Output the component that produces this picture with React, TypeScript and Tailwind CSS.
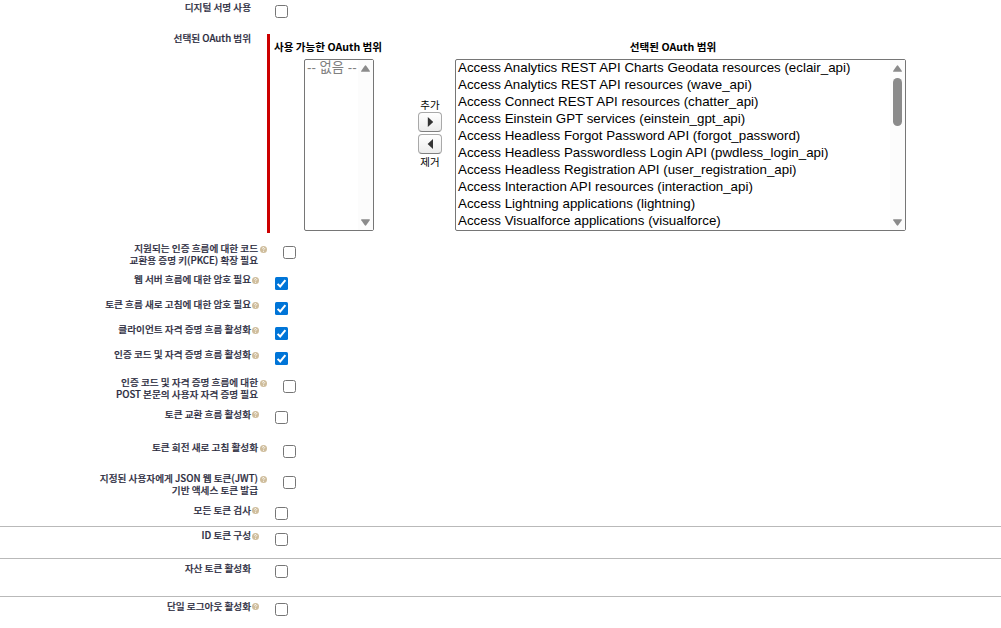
import React from 'react';

type Field = {
  lines: string[];
  height: string;
  help?: boolean;
  wide?: boolean;
  checked?: boolean;
  divider?: boolean;
  lower?: boolean;
};

const signature: Field = { lines: ['디지털 서명 사용'], height: 'h-[32px]' };

const fields: Field[] = [
  { lines: ['지원되는 인증 흐름에 대한 코드', '교환용 증명 키(PKCE) 확장 필요'], height: 'h-[31px]', help: true, wide: true },
  { lines: ['웹 서버 흐름에 대한 암호 필요'], height: 'h-[25px]', help: true, checked: true },
  { lines: ['토큰 흐름 새로 고침에 대한 암호 필요'], height: 'h-[25px]', help: true, checked: true },
  { lines: ['클라이언트 자격 증명 흐름 활성화'], height: 'h-[25px]', help: true, checked: true },
  { lines: ['인증 코드 및 자격 증명 흐름 활성화'], height: 'h-[28px]', help: true, checked: true },
  { lines: ['인증 코드 및 자격 증명 흐름에 대한', 'POST 본문의 사용자 자격 증명 필요'], height: 'h-[31px]', help: true, wide: true },
  { lines: ['토큰 교환 흐름 활성화'], height: 'h-[34px]', help: true, lower: true },
  { lines: ['토큰 회전 새로 고침 활성화'], height: 'h-[31px]', help: true, wide: true },
  { lines: ['지정된 사용자에게 JSON 웹 토큰(JWT)', '기반 액세스 토큰 발급'], height: 'h-[31px]', help: true, wide: true },
  { lines: ['모든 토큰 검사'], height: 'h-[22px]', help: true, lower: true },
  { lines: ['ID 토큰 구성'], height: 'h-[32px]', help: true, divider: true },
  { lines: ['자산 토큰 활성화'], height: 'h-[38px]', divider: true, lower: true },
  { lines: ['단일 로그아웃 활성화'], height: 'h-[32px]', help: true, divider: true, lower: true },
];

const scopes = [
  'Access Analytics REST API Charts Geodata resources (eclair_api)',
  'Access Analytics REST API resources (wave_api)',
  'Access Connect REST API resources (chatter_api)',
  'Access Einstein GPT services (einstein_gpt_api)',
  'Access Headless Forgot Password API (forgot_password)',
  'Access Headless Passwordless Login API (pwdless_login_api)',
  'Access Headless Registration API (user_registration_api)',
  'Access Interaction API resources (interaction_api)',
  'Access Lightning applications (lightning)',
  'Access Visualforce applications (visualforce)',
];

const labelText =
  'whitespace-nowrap text-right text-[9.65px] leading-[12px] font-medium text-[#2c2c40] [-webkit-text-stroke:0.2px_#2c2c40]';
const optionText = "font-['Liberation_Sans','Noto_Sans_CJK_KR',sans-serif] text-[13.33px] whitespace-nowrap -mt-px";

function HelpIcon() {
  return (
    <svg viewBox="0 0 14 14" className="size-[7px] shrink-0">
      <circle cx="7" cy="7" r="7" fill="#cfbd9c" />
      <path d="M5 5.2a2 2 0 1 1 3 1.8c-.7.4-1 .8-1 1.4M7 10v1.6" fill="none" stroke="#fff" strokeWidth="1.7" />
    </svg>
  );
}

function Checkbox({ checked }: { checked?: boolean }) {
  return (
    <span
      role="checkbox"
      aria-checked={!!checked}
      className={
        checked
          ? 'flex size-[13px] shrink-0 rounded-[1.5px] bg-[#0075d8]'
          : 'flex size-[13px] shrink-0 rounded-[2.5px] border border-[#767676] bg-white'
      }
    >
      {checked && (
        <svg viewBox="0 0 13 13" className="size-[13px]">
          <path d="M2.6 6.9l2.6 2.6 5.2-6.3" fill="none" stroke="#fff" strokeWidth="2" />
        </svg>
      )}
    </span>
  );
}

function FieldRow({ field }: { field: Field }) {
  return (
    <div className={`flex shrink-0 items-start ${field.height} ${field.divider ? 'border-t border-[#b9b9b9] pt-[3px]' : ''}`}>
      <div className={`${labelText} ${field.wide ? 'w-[258px]' : 'w-[251px]'} ${field.lower ? '' : '-mt-px'}`}>
        {field.lines.map((line) => (
          <div key={line}>{line}</div>
        ))}
      </div>
      <div className={`flex pt-[3px] ${field.wide ? 'w-[25px] pl-[2px]' : 'w-[24px] pl-px'}`}>{field.help && <HelpIcon />}</div>
      <div className="pt-[3px]">
        <Checkbox checked={field.checked} />
      </div>
    </div>
  );
}

function Arrow({ down }: { down?: boolean }) {
  return (
    <svg viewBox="0 0 9 7" className="h-[7px] w-[9px] shrink-0">
      <path
        d={down ? 'M.8.2h7.4q1.1 0 .5 1L5.4 6.1q-.9 1.2-1.8 0L.3 1.2Q-.3.2.8.2z' : 'M.8 6.8h7.4q1.1 0 .5-1L5.4.9q-.9-1.2-1.8 0L.3 5.8q-.6 1 .5 1z'}
        fill="#8b8b8b"
      />
    </svg>
  );
}

function ScrollBar({ thumb }: { thumb?: boolean }) {
  return (
    <div className="flex w-[15px] shrink-0 flex-col items-center bg-[#fcfcfc] pt-[5px] pb-[4px]">
      <Arrow />
      {thumb && <div className="mt-[6px] h-[48px] w-[9px] rounded-full bg-[#8b8b8b]" />}
      <div className="mt-auto flex">
        <Arrow down />
      </div>
    </div>
  );
}

function MoveButton({ left }: { left?: boolean }) {
  return (
    <button className="flex h-[20px] w-[24px] items-center justify-center rounded-[4px] border border-[#a9a9a9] border-b-[#7f7f7f] bg-linear-to-b from-white to-[#ececec]">
      <svg viewBox="0 0 6 10" className="h-[10px] w-[6px]">
        <path d={left ? 'M6 0v10L.6 5z' : 'M.8 0v10L6.2 5z'} fill="#333" />
      </svg>
    </button>
  );
}

const title = 'h-[16px] whitespace-nowrap text-[10.6px] leading-[16px] font-bold text-black';

function ScopePicker() {
  return (
    <div className="flex h-[209px] shrink-0 items-start">
      <div className={`${labelText} -mt-[2px] w-[251px]`}>선택된 OAuth 범위</div>
      <div className="ml-[16px] h-[199px] w-[3px] bg-[#c00]" />
      <div className="ml-[3px] flex w-[110px] flex-col items-center pt-[5px]">
        <div className={title}>사용 가능한 OAuth 범위</div>
        <div className="mt-[4px] ml-[31px] flex h-[172px] w-[70px] self-start rounded-[2px] border border-[#767676]">
          <div className={`${optionText} w-[53px] pl-[2px] leading-[17px] text-[#808080]`}>-- 없음 --</div>
          <ScrollBar />
        </div>
      </div>
      <div className="ml-[35px] flex w-[24px] flex-col items-center pt-[63px] text-[10.5px] text-black">
        <div className="h-[15px] leading-[15px] whitespace-nowrap">추가</div>
        <MoveButton />
        <div className="h-[2px]" />
        <MoveButton left />
        <div className="h-[15px] leading-[15px] whitespace-nowrap">제거</div>
      </div>
      <div className="ml-[13px] flex w-[451px] flex-col pt-[5px]">
        <div className={`${title} pr-[15px] text-center`}>선택된 OAuth 범위</div>
        <div className="mt-[4px] flex h-[172px] w-[451px] rounded-[2px] border border-[#767676]">
          <div className={`${optionText} flex-1 pl-[2px] text-black`}>
            {scopes.map((scope) => (
              <div key={scope} className="h-[17px] leading-[17px]">
                {scope}
              </div>
            ))}
          </div>
          <ScrollBar thumb />
        </div>
      </div>
    </div>
  );
}

export default function App() {
  return (
    <div className="flex h-[628px] w-[1001px] flex-col overflow-hidden bg-white pt-[2px] font-['Noto_Sans_CJK_KR',sans-serif]">
      <FieldRow field={signature} />
      <ScopePicker />
      {fields.map((field) => (
        <FieldRow key={field.lines[0]} field={field} />
      ))}
    </div>
  );
}
